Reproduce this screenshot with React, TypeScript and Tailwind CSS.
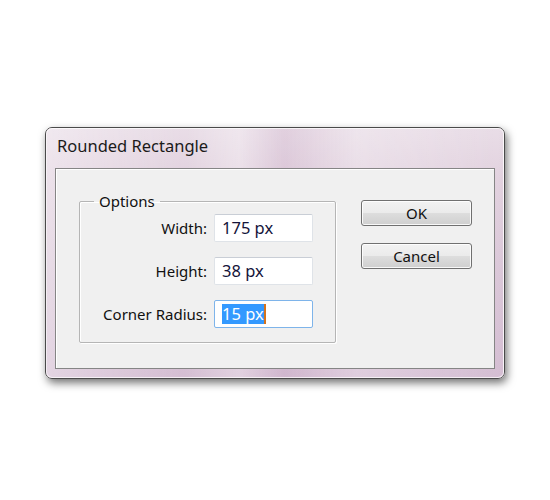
import React from "react";

const font = "font-['Noto_Sans',_'Open_Sans',_sans-serif]";

const Field = ({
  label,
  value,
  focused,
}: {
  label: string;
  value: string;
  focused?: boolean;
}) => (
  <div className="flex items-center justify-end gap-[7px]">
    <span className="text-[15px] leading-[20px] text-[#111]">{label}</span>
    <div
      className={
        focused
          ? "flex h-[28px] w-[99px] items-center rounded-[2px] border border-[#7eb4ea] bg-white pl-[7px]"
          : "flex h-[28px] w-[99px] items-center rounded-[2px] border border-[#dfe3e8] border-t-[#c9ced6] bg-white pl-[7px]"
      }
    >
      {focused ? (
        <span className="flex items-center">
          <span className="bg-[#3399ff] text-[16.5px] leading-[20px] text-white">
            {value}
          </span>
          <span className="h-[20px] w-[2px] bg-[#d4731e]" />
        </span>
      ) : (
        <span className="text-[16.5px] leading-[20px] text-[#14143a]">
          {value}
        </span>
      )}
    </div>
  </div>
);

const WinButton = ({ children }: { children: React.ReactNode }) => (
  <button className="h-[26px] w-[111px] rounded-[3px] border border-[#707070] bg-[linear-gradient(180deg,#f2f2f2_0%,#ebebeb_48%,#dddddd_52%,#cfcfcf_100%)] text-[15px] leading-[20px] text-[#111] shadow-[inset_0_0_0_1px_rgba(255,255,255,0.85)]">
    {children}
  </button>
);

export default function App() {
  return (
    <div className={`min-h-[500px] w-[550px] bg-white pl-[45px] pt-[127px] ${font}`}>
      <div className="h-[252px] w-[460px] rounded-[7px] border border-[#4a4a4a] bg-[linear-gradient(180deg,#e9dde7_0%,#e2d2df_20%,#dac7d8_60%,#d5bed3_100%)] shadow-[2px_4px_9px_rgba(0,0,0,0.55)]">
        <div className="flex h-full flex-col rounded-[6px] border border-white/70 bg-[linear-gradient(90deg,rgba(255,255,255,0.35)_0%,rgba(255,255,255,0)_30%,rgba(255,255,255,0.3)_42%,rgba(190,150,185,0.18)_52%,rgba(255,255,255,0.25)_68%,rgba(255,255,255,0)_100%)]">
          <div className="flex h-[39px] items-start pl-[10px] pt-[7px]">
            <span className="text-[16.5px] leading-[20px] text-[#1a1a1a]">
              Rounded Rectangle
            </span>
          </div>
          <div className="mx-[8px] mb-[8px] flex-1 border border-[#858585] bg-[#f0f0f0] shadow-[inset_1px_1px_0_#ffffff]">
            <div className="flex pl-[23px] pt-[22px]">
              <fieldset className="h-[152px] w-[257px] rounded-[2px] border border-[#b5b5b5] shadow-[inset_1px_1px_0_#ffffff,1px_1px_0_#ffffff]">
                <legend className="ml-[14px] px-[5px] text-[15px] leading-[20px] text-[#111]">
                  Options
                </legend>
                <div className="flex flex-col gap-[15px] pr-[22px] pt-[3px]">
                  <Field label="Width:" value="175 px" />
                  <Field label="Height:" value="38 px" />
                  <Field label="Corner Radius:" value="15 px" focused />
                </div>
              </fieldset>
              <div className="ml-[25px] flex flex-col gap-[17px] pt-[9px]">
                <WinButton>OK</WinButton>
                <WinButton>Cancel</WinButton>
              </div>
            </div>
          </div>
        </div>
      </div>
    </div>
  );
}
